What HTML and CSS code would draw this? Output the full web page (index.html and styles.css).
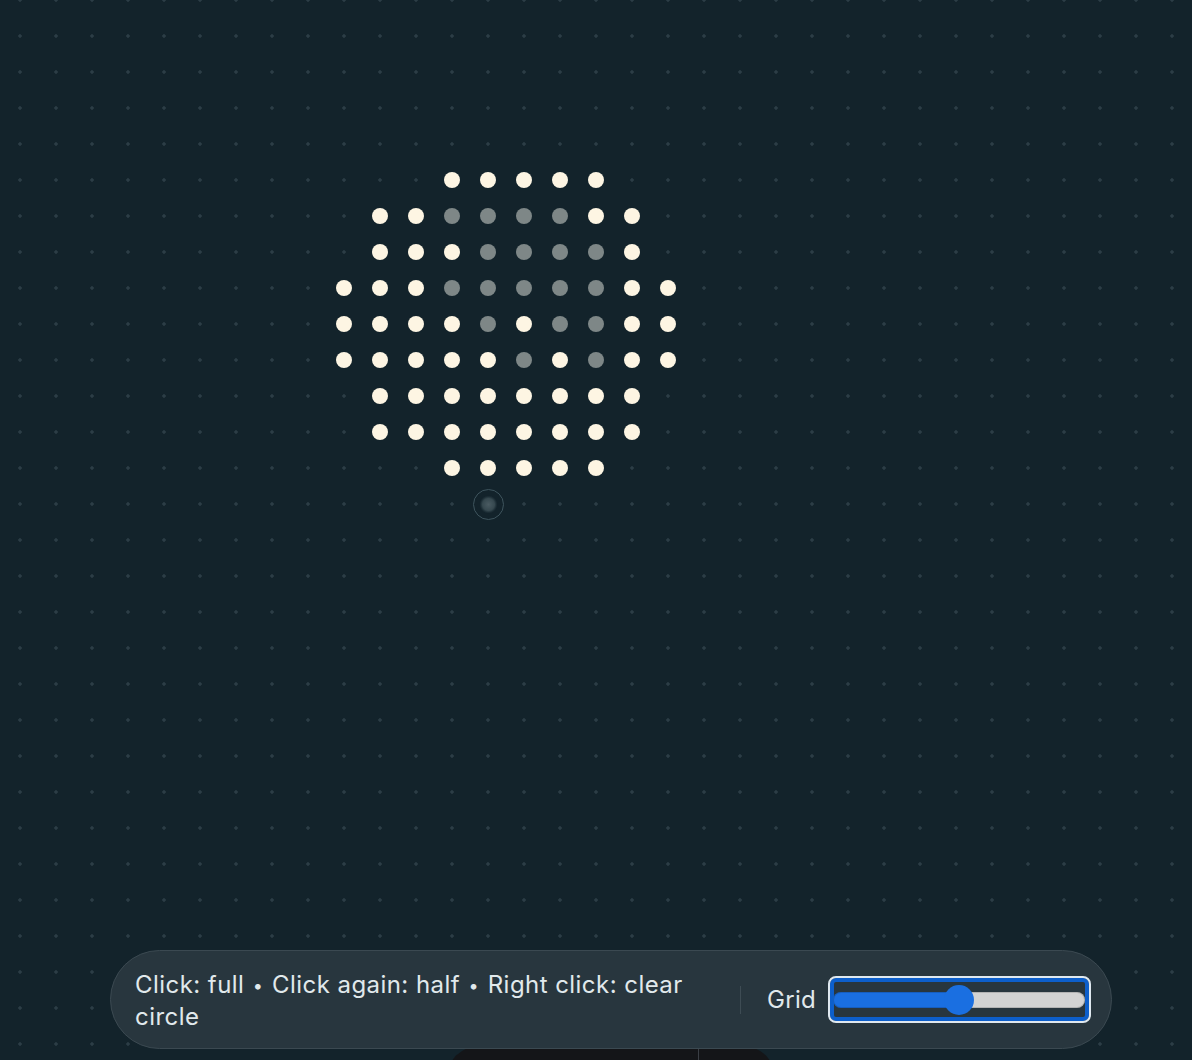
FILE: index.html
```html
<!DOCTYPE html>
<html lang="en">
<head>
<meta charset="utf-8">
<title>Dot Circle</title>
<link rel="stylesheet" href="styles.css">
</head>
<body>
<main class="canvas">
  <div class="board">
    <span></span><span></span><span></span><span class="f"></span><span class="f"></span><span class="f"></span><span class="f"></span><span class="f"></span><span></span><span></span>
    <span></span><span class="f"></span><span class="f"></span><span class="h"></span><span class="h"></span><span class="h"></span><span class="h"></span><span class="f"></span><span class="f"></span><span></span>
    <span></span><span class="f"></span><span class="f"></span><span class="f"></span><span class="h"></span><span class="h"></span><span class="h"></span><span class="h"></span><span class="f"></span><span></span>
    <span class="f"></span><span class="f"></span><span class="f"></span><span class="h"></span><span class="h"></span><span class="h"></span><span class="h"></span><span class="h"></span><span class="f"></span><span class="f"></span>
    <span class="f"></span><span class="f"></span><span class="f"></span><span class="f"></span><span class="h"></span><span class="f"></span><span class="h"></span><span class="h"></span><span class="f"></span><span class="f"></span>
    <span class="f"></span><span class="f"></span><span class="f"></span><span class="f"></span><span class="f"></span><span class="h"></span><span class="f"></span><span class="h"></span><span class="f"></span><span class="f"></span>
    <span></span><span class="f"></span><span class="f"></span><span class="f"></span><span class="f"></span><span class="f"></span><span class="f"></span><span class="f"></span><span class="f"></span><span></span>
    <span></span><span class="f"></span><span class="f"></span><span class="f"></span><span class="f"></span><span class="f"></span><span class="f"></span><span class="f"></span><span class="f"></span><span></span>
    <span></span><span></span><span></span><span class="f"></span><span class="f"></span><span class="f"></span><span class="f"></span><span class="f"></span><span></span><span></span>
    <span></span><span></span><span></span><span></span><span class="r"></span><span></span><span></span><span></span><span></span><span></span>
  </div>
</main>
<div class="dock"><span class="dock-split"></span></div>
<footer class="toolbar">
  <p class="hint">Click: full<span class="sep"> • </span>Click again: half<span class="sep"> • </span>Right click: clear circle</p>
  <div class="controls">
    <span class="divider"></span>
    <label class="label" for="grid">Grid</label>
    <span class="range-frame"><input id="grid" class="range" type="range" min="0" max="100" value="50" style="--pct: 50%"></span>
  </div>
</footer>
</body>
</html>
```
FILE: styles.css
```css
* { box-sizing: border-box; }

html, body {
  margin: 0;
  padding: 0;
  width: 1192px;
  height: 1060px;
  overflow: hidden;
}

body {
  position: relative;
  background-color: #13232b;
  background-image: radial-gradient(circle, #2c3d46 1.4px, transparent 2px);
  background-size: 36px 36px;
  background-position: 2px 18px;
  font-family: Inter, "Noto Sans", "Liberation Sans", sans-serif;
  color: #e1e9ec;
}

.canvas {
  position: absolute;
  inset: 0;
}

.board {
  position: absolute;
  left: 326px;
  top: 162px;
  display: grid;
  grid-template-columns: repeat(10, 36px);
  grid-template-rows: repeat(10, 36px);
}

.board span {
  display: flex;
  align-items: center;
  justify-content: center;
}

.board .f::before,
.board .h::before {
  content: "";
  width: 16px;
  height: 16px;
  border-radius: 50%;
  background: #fdf5e3;
}

.board .h::before {
  background: #7e8787;
}

.board .r::before {
  content: "";
  width: 29px;
  height: 29px;
  border-radius: 50%;
  border: 1.5px solid #3e545d;
  background: radial-gradient(circle, #4a5b62 0, #36484f 6px, #1b2c34 8px, transparent 9px);
}

.dock {
  position: absolute;
  left: 447px;
  top: 1046px;
  width: 328px;
  height: 40px;
  background: #141518;
  border-radius: 32px 32px 0 0;
}

.dock-split {
  position: absolute;
  left: 251px;
  top: 0;
  bottom: 0;
  width: 1px;
  background: #3a3e44;
}

.toolbar {
  position: absolute;
  left: 110px;
  top: 950px;
  width: 1002px;
  height: 99px;
  display: flex;
  align-items: center;
  padding: 0 22px 0 24px;
  background: #28363e;
  border: 1px solid #3b4951;
  border-radius: 50px;
}

.hint {
  flex: 1;
  margin: 0;
  padding-top: 3px;
  font-size: 24px;
  line-height: 32px;
  letter-spacing: 0.45px;
  color: #e1e9ec;
}

.sep {
  font-size: 18px;
  word-spacing: 3px;
  vertical-align: middle;
  line-height: 1;
}

.controls {
  display: flex;
  align-items: center;
}

.divider {
  width: 1px;
  height: 28px;
  background: #3e4c54;
  margin: 0 26px 0 14px;
}

.label {
  font-size: 24px;
  line-height: 32px;
  letter-spacing: 0.3px;
  color: #e1e9ec;
  margin-right: 14px;
}

.range-frame {
  display: flex;
  align-items: center;
  width: 259px;
  height: 43px;
  border: 4px solid #0d5fcb;
  outline: 2px solid #dfe8ef;
  border-radius: 6px;
}

.range {
  -webkit-appearance: none;
  appearance: none;
  width: 253px;
  height: 35px;
  margin: 0 0 0 -1px;
  background: transparent;
}

.range::-webkit-slider-runnable-track {
  height: 16px;
  border-radius: 8px;
  background: linear-gradient(to right, #1a6fe1 var(--pct), #d3d3d3 var(--pct));
  box-shadow: inset 0 0 0 1px rgba(0, 0, 0, 0.15);
}

.range::-webkit-slider-thumb {
  -webkit-appearance: none;
  appearance: none;
  width: 30px;
  height: 30px;
  margin-top: -7px;
  border-radius: 50%;
  background: #1a6fe1;
  border: none;
}
```
